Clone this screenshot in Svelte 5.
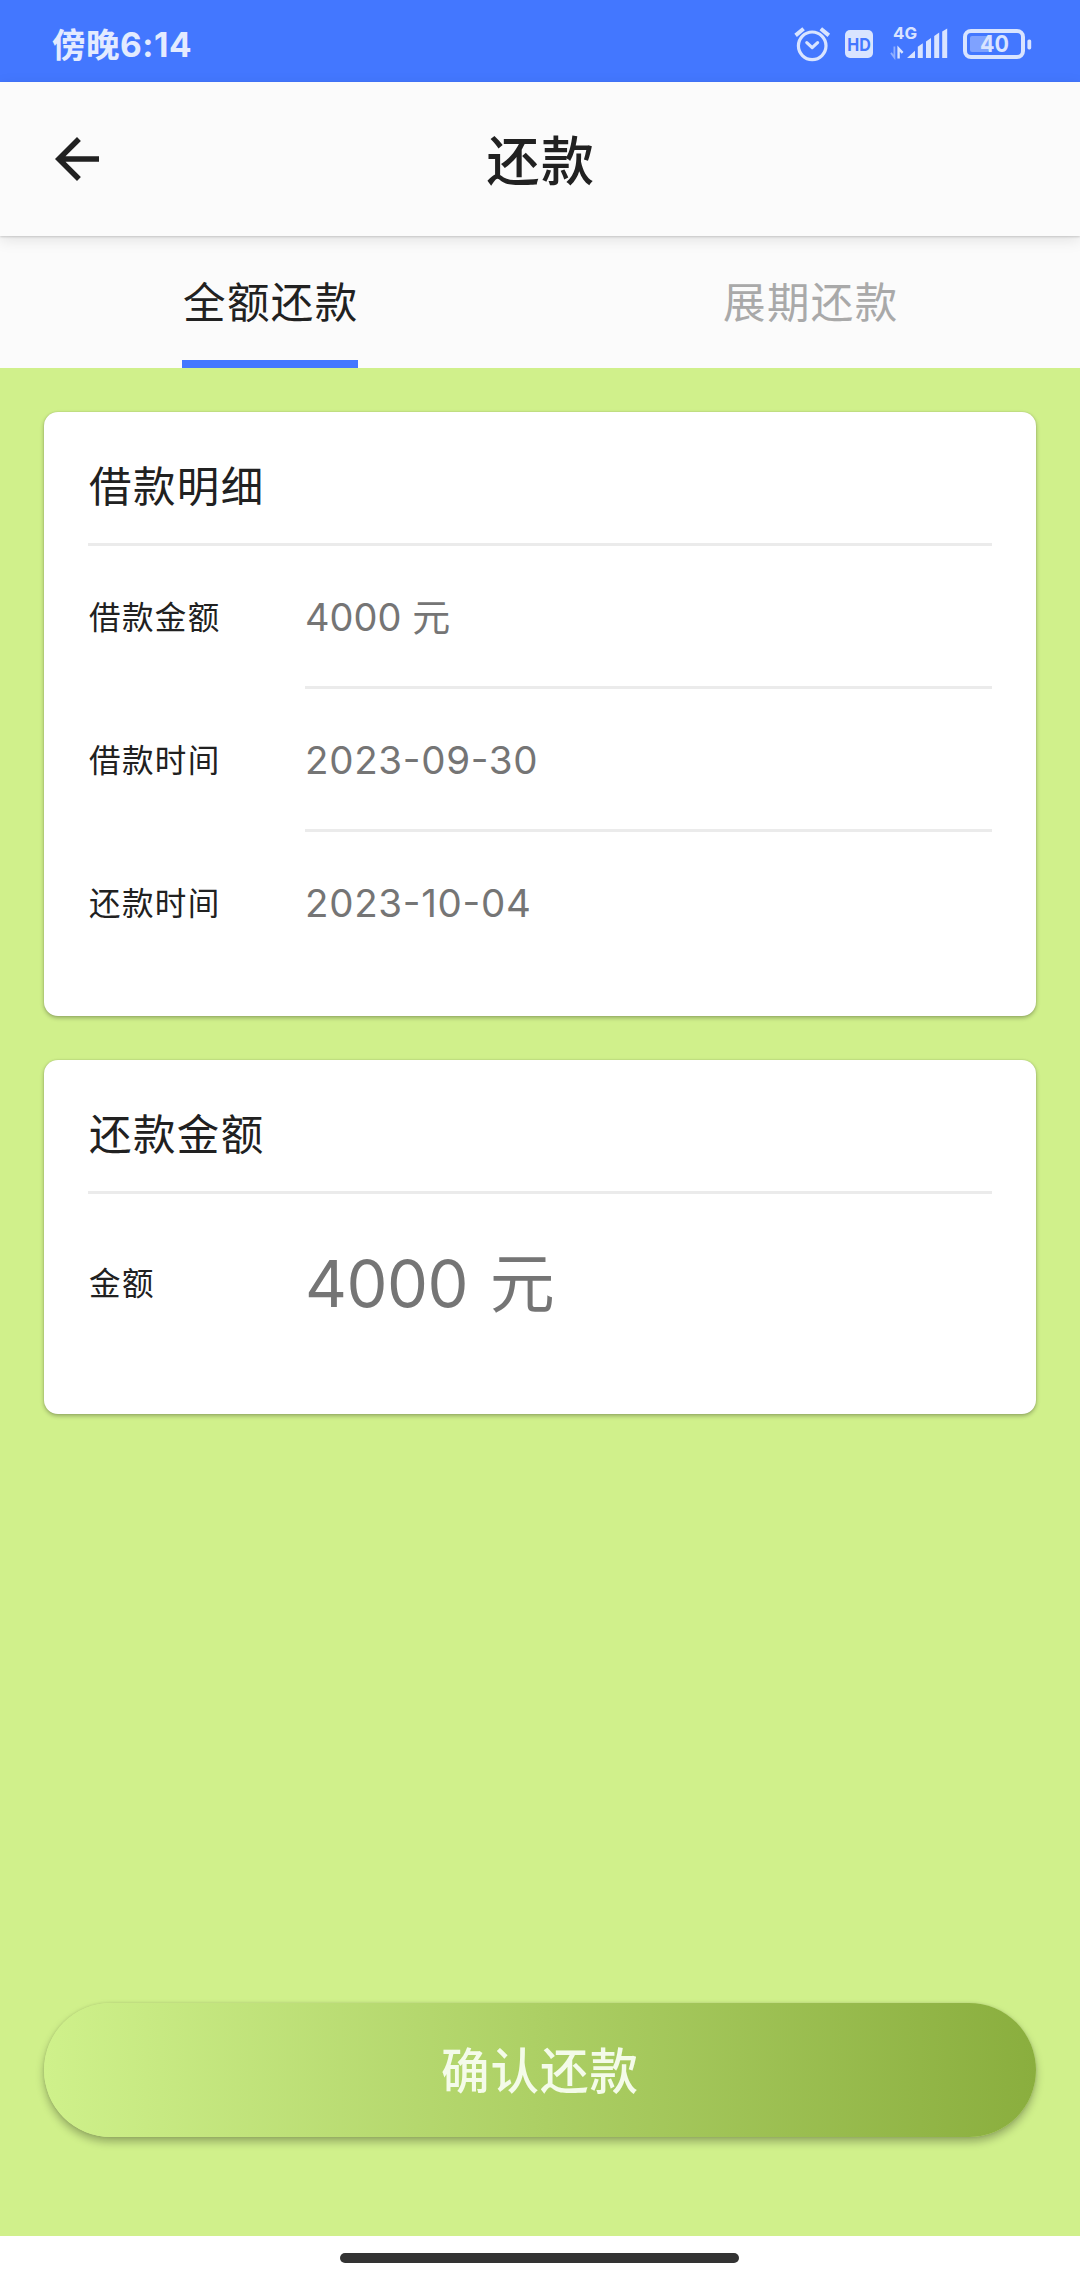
<script>
const loanRows = [
    ["借款金额", "4000 元", false],
    ["借款时间", "2023-09-30", true],
    ["还款时间", "2023-10-04", true]
];

const tabs = ["全额还款", "展期还款"];
let activeTab = 0;
</script>

<div class="screen">
    <div class="status">
        <div class="time">傍晚6:14</div>
        <svg class="status-icons" width="244" height="82" viewBox="790 0 244 82">
            <!-- alarm -->
            <g fill="none" stroke="#d9e4ff" stroke-width="3.2" stroke-linecap="round" stroke-linejoin="round">
                <circle cx="812.2" cy="45.8" r="13.8"/>
                <path d="M806.8 42.6l5.4 5 5.4-5"/>
                <path d="M795.6 35.4l8-6.6M828.8 35.4l-8-6.6" stroke-width="4" stroke-linecap="butt"/>
            </g>
            <!-- hd -->
            <rect x="845" y="30" width="28" height="28" rx="5" fill="#d9e4ff"/>
            <text x="859" y="51.3" class="hd" textLength="23.5" lengthAdjust="spacingAndGlyphs">HD</text>
            <!-- signal -->
            <text x="893" y="39.2" class="net" textLength="24" lengthAdjust="spacingAndGlyphs">4G</text>
            <path d="M894.4 46.5v11l-3.4-4.6" fill="none" stroke="#8fafff" stroke-width="1.8"/>
            <path d="M898.6 58.5V48.5l4 4.4" fill="none" stroke="#d9e4ff" stroke-width="2.4"/>
            <path fill="#d9e4ff" d="M907 58l8-7.3V58zM917.8 58V46.8l5-3.6V58zM926 58V41.4l5-3.4V58zM934.2 58V36l5-3.4V58zM942.2 58V31.4l5-3V58z"/>
            <!-- battery -->
            <rect x="970" y="36" width="19" height="16" rx="2" fill="#7fa2ff"/>
            <rect x="965" y="31" width="58" height="26" rx="6" fill="none" stroke="#d9e4ff" stroke-width="4"/>
            <rect x="1027.4" y="39.4" width="3.8" height="10" rx="1.6" fill="#d9e4ff"/>
            <text x="994.5" y="52.4" class="level" textLength="29" lengthAdjust="spacingAndGlyphs">40</text>
        </svg>
    </div>

    <div class="header">
        <svg class="back" width="66" height="66" viewBox="0 0 24 24">
            <path fill="#212121" d="M20 11H7.83l5.59-5.59L12 4l-8 8 8 8 1.41-1.41L7.83 13H20v-2z"/>
        </svg>
        <div class="title">还款</div>
    </div>

    <div class="tabs">
        {#each tabs as tab, i}
        <div class="tab" class:active={i == activeTab}>
            <span class="tab-label">{tab}</span>
        </div>
        {/each}
    </div>

    <div class="content">
        <div class="card">
            <div class="card-title">借款明细</div>
            {#each loanRows as row}
            <div class="row">
                <div class="label">{row[0]}</div>
                <div class="value" class:date={row[2]}>{row[1]}</div>
            </div>
            {/each}
        </div>

        <div class="card total">
            <div class="card-title">还款金额</div>
            <div class="row">
                <div class="label">金额</div>
                <div class="value big">4000 元</div>
            </div>
        </div>

        <button class="confirm">确认还款</button>
    </div>

    <div class="navbar">
        <div class="home"></div>
    </div>
</div>

<style>
    :global(body) {
        margin: 0;
    }

    .screen {
        width: 1080px;
        height: 2280px;
        display: flex;
        flex-direction: column;
        background: #fff;
        color: #212121;
        font-family: "Inter", "Noto Sans CJK SC", sans-serif;
        overflow: hidden;
    }

    .status {
        height: 82px;
        flex-shrink: 0;
        display: flex;
        justify-content: space-between;
        box-sizing: border-box;
        padding: 0 46px 0 52px;
        background: #4377ff;
    }

    .time {
        line-height: 90px;
        font-size: 33.5px;
        letter-spacing: 0.5px;
        font-weight: 700;
        color: #e3ebff;
    }

    .hd, .net, .level {
        font-family: "Inter", sans-serif;
        font-weight: 700;
    }

    .hd {
        font-size: 18px;
        fill: #4377ff;
        text-anchor: middle;
    }

    .net {
        font-size: 16px;
        fill: #d9e4ff;
    }

    .level {
        font-size: 22.5px;
        fill: #d9e4ff;
        text-anchor: middle;
    }

    .header {
        height: 154px;
        flex-shrink: 0;
        display: grid;
        grid-template-columns: 66px 1fr 66px;
        align-items: center;
        box-sizing: border-box;
        padding: 0 44px;
        background: #fbfbfb;
        box-shadow: 0 1px 2px rgba(0, 0, 0, 0.16), 0 4px 14px rgba(0, 0, 0, 0.1);
        z-index: 1;
    }

    .title {
        padding: 6px 0 0 2px;
        font-size: 53px;
        letter-spacing: 1.5px;
        line-height: 60px;
        font-weight: 500;
        text-align: center;
    }

    .tabs {
        height: 132px;
        flex-shrink: 0;
        display: grid;
        grid-template-columns: 1fr 1fr;
        justify-items: center;
        background: #fbfbfb;
    }

    .tab {
        box-sizing: border-box;
        width: 176px;
        height: 132px;
        border-bottom: 8px solid transparent;
        color: #a9a9a9;
        text-align: center;
        white-space: nowrap;
    }

    .tab-label {
        padding-left: 1px;
        font-size: 42.5px;
        letter-spacing: 1.4px;
        line-height: 133px;
    }

    .active {
        color: #212121;
        border-color: #4377ff;
    }

    .content {
        flex: 1;
        display: flex;
        flex-direction: column;
        gap: 44px;
        padding: 44px 44px 99px;
        background: #d0f08b;
    }

    .card {
        box-sizing: border-box;
        height: 604px;
        padding: 0 44px;
        border-radius: 14px;
        background: #fff;
        box-shadow: 0 2px 4px rgba(0, 0, 0, 0.28), 0 0 2px rgba(0, 0, 0, 0.14);
    }

    .total {
        height: 354px;
    }

    .card-title {
        height: 131px;
        border-bottom: 3px solid #ebebeb;
        font-size: 42.5px;
        letter-spacing: 1.4px;
        line-height: 150px;
        text-indent: 1px;
    }

    .row {
        display: grid;
        grid-template-columns: 217px 1fr;
        grid-template-rows: 143px;
        line-height: 143px;
    }

    .label {
        font-size: 31.5px;
        letter-spacing: 1.4px;
        text-indent: 1px;
    }

    .value {
        box-sizing: border-box;
        height: 143px;
        border-bottom: 3px solid #ebebeb;
        font-size: 38px;
        font-feature-settings: "case";
        color: #757575;
    }

    .date {
        font-size: 38.5px;
        letter-spacing: 0.7px;
    }

    .row:last-child .value {
        border-bottom: 0;
    }

    .total .row {
        line-height: 180px;
    }

    .big {
        font-size: 65px;
        letter-spacing: -0.5px;
        word-spacing: 4px;
    }

    .confirm {
        margin-top: auto;
        height: 134px;
        padding: 0 0 4px;
        border: 0;
        border-radius: 67px;
        background: linear-gradient(90deg, #cff18b, #8aae3e);
        box-shadow: 0 5px 8px rgba(0, 0, 0, 0.28), 0 0 3px rgba(0, 0, 0, 0.12);
        color: #f4fbe9;
        font-family: inherit;
        font-size: 48.5px;
        letter-spacing: 1px;
        font-weight: 500;
    }

    .navbar {
        height: 44px;
        flex-shrink: 0;
        display: flex;
        align-items: center;
        justify-content: center;
        box-sizing: border-box;
        padding-right: 1px;
    }

    .home {
        width: 399px;
        height: 10px;
        border-radius: 5px;
        background: #333;
    }
</style>
